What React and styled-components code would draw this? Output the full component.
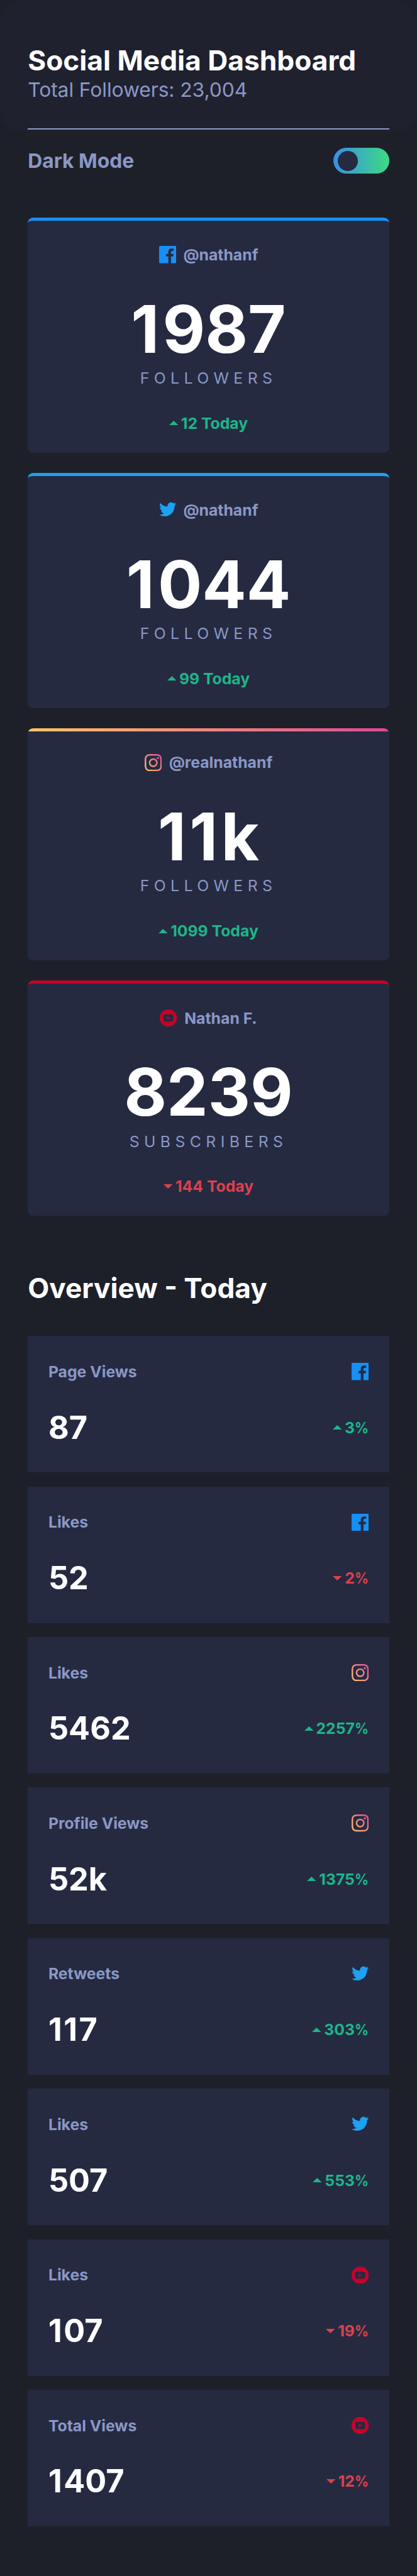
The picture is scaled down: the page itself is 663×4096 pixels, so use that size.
import React from "react";
import styled, { createGlobalStyle } from "styled-components";

/* Converts design units (750-wide artboard) to page pixels. */
const u = (n) => `${+(n * 0.884).toFixed(3)}px`;

const color = {
  page: "#1e2029",
  top: "#1f212e",
  card: "#252a41",
  text: "#8b97c6",
  white: "#ffffff",
  up: "#1eb589",
  down: "#dc414c",
  facebook: "#178ff5",
  twitter: "#1da1f2",
  youtube: "#c4032b",
};

const GlobalStyle = createGlobalStyle`
  *, *::before, *::after { box-sizing: border-box; }
  body {
    margin: 0;
    background: ${color.page};
    font-family: Inter, "Liberation Sans", sans-serif;
    color: ${color.text};
  }
  h1, h2, p { margin: 0; }
`;

const Page = styled.main`
  height: 4096px;
  overflow: hidden;
`;

const Top = styled.div`
  height: ${u(237)};
  border-radius: ${u(40)};
  background: ${color.top};
  padding: ${u(78)} ${u(50)} 0;
`;

const Title = styled.h1`
  font-size: ${u(50.1)};
  line-height: ${u(62)};
  font-weight: 700;
  color: ${color.white};
`;

const Total = styled.p`
  font-size: ${u(36)};
  line-height: ${u(42)};
  font-weight: 400;
  letter-spacing: ${u(-0.1)};
`;

const Rule = styled.div`
  margin-top: ${u(49)};
  height: ${u(2)};
  background: ${color.text};
`;

const ModeRow = styled.div`
  display: flex;
  justify-content: space-between;
  align-items: center;
  height: ${u(48)};
  margin: ${u(28)} ${u(50)} ${u(78)};
  font-size: ${u(36)};
  font-weight: 700;
`;

const Toggle = styled.div`
  width: ${u(100)};
  height: ${u(47)};
  padding: ${u(6)} ${u(8)};
  border-radius: ${u(24)};
  background: linear-gradient(90deg, #378fe6, #3eda82);
`;

const Knob = styled.div`
  width: ${u(36)};
  height: ${u(36)};
  border-radius: 50%;
  background: ${color.card};
`;

const Followers = styled.section`
  display: flex;
  flex-direction: column;
  gap: ${u(36.7)};
  padding: 0 ${u(50)};
`;

const FollowerCard = styled.article`
  display: flex;
  flex-direction: column;
  align-items: center;
  height: ${(p) => (p.$gradient ? u(417) : u(423))};
  border-radius: ${u(10)};
  background: ${(p) =>
    p.$gradient
      ? `linear-gradient(90deg, #fdc366, #df4896) top / 100% ${u(6)} no-repeat, ${color.card}`
      : color.card};
  border-top: ${(p) => (p.$gradient ? "0" : `${u(6)} solid ${p.$accent}`)};
  padding-top: ${(p) => (p.$gradient ? u(44) : u(44.34))};
`;

const Handle = styled.div`
  display: flex;
  align-items: center;
  gap: ${u(13)};
  height: ${u(34)};
  font-size: ${u(28)};
  font-weight: 700;
`;

const BigNumber = styled.div`
  margin-top: ${u(46)};
  height: ${u(142)};
  line-height: ${u(142)};
  font-size: ${u(118)};
  font-weight: 700;
  color: ${color.white};
`;

const One = styled.span`
  letter-spacing: 0.05em;
`;

const Caption = styled.div`
  height: ${u(34)};
  line-height: ${u(34)};
  font-size: ${u(28)};
  font-weight: 400;
  letter-spacing: ${u(8.4)};
  text-transform: uppercase;
`;

const Change = styled.div`
  display: flex;
  align-items: center;
  gap: ${u(5)};
  height: ${u(34)};
  font-size: ${u(28)};
  font-weight: 700;
  color: ${(p) => (p.$down ? color.down : color.up)};
`;

const TodayChange = styled(Change)`
  margin-top: ${u(47)};
`;

/* Slightly condensed percent sign. */
const Percent = styled.span`
  display: inline-block;
  margin-left: -0.12em;
  transform: scaleX(0.88);
  transform-origin: right;
`;

const Arrow = styled.svg`
  width: ${u(16.5)};
  height: ${u(8)};
  fill: currentColor;
`;

const Heading = styled.h2`
  margin: ${u(99)} ${u(50)} ${u(55)};
  font-size: ${u(50)};
  line-height: ${u(62)};
  font-weight: 700;
  color: ${color.white};
`;

const Overview = styled.section`
  display: flex;
  flex-direction: column;
  gap: ${u(25.5)};
  padding: 0 ${u(50)};
`;

const StatCard = styled.article`
  height: ${u(245.35)};
  padding: ${u(47)} ${u(37)} 0;
  background: ${color.card};
`;

const StatRow = styled.div`
  display: flex;
  justify-content: space-between;
  align-items: center;
`;

const StatLabel = styled.div`
  height: ${u(34)};
  line-height: ${u(34)};
  font-size: ${u(28)};
  font-weight: 700;
`;

const StatBottom = styled(StatRow)`
  margin-top: ${u(49.5)};
`;

const StatValue = styled.div`
  height: ${u(68)};
  line-height: ${u(68)};
  font-size: ${u(57)};
  font-weight: 700;
  color: ${color.white};
`;

const Icon = styled.svg`
  display: block;
  width: ${u(31)};
  height: ${u(31)};
`;

const icons = {
  facebook: (
    <Icon viewBox="0 0 20 20">
      <path
        fill={color.facebook}
        d="M18.896 0H1.104C.494 0 0 .494 0 1.104v17.793C0 19.506.494 20 1.104 20h9.58v-7.745H8.076V9.237h2.606V7.01c0-2.583 1.578-3.99 3.883-3.99 1.104 0 2.052.082 2.329.119v2.7h-1.598c-1.254 0-1.496.597-1.496 1.47v1.928h2.989l-.39 3.018h-2.6V20h5.098c.608 0 1.102-.494 1.102-1.104V1.104C20 .494 19.506 0 18.896 0z"
      />
    </Icon>
  ),
  twitter: (
    <Icon viewBox="0 -1 20 20">
      <path
        fill={color.twitter}
        d="M20 2.172a8.192 8.192 0 01-2.357.646 4.11 4.11 0 001.805-2.27 8.22 8.22 0 01-2.606.996A4.096 4.096 0 0013.847.248c-2.65 0-4.596 2.472-3.998 5.037A11.648 11.648 0 011.392.998a4.109 4.109 0 001.27 5.478 4.086 4.086 0 01-1.858-.513c-.045 1.9 1.318 3.679 3.291 4.075a4.113 4.113 0 01-1.853.07 4.106 4.106 0 003.833 2.849A8.25 8.25 0 010 14.658a11.616 11.616 0 006.29 1.843c7.618 0 11.922-6.434 11.662-12.205A8.354 8.354 0 0020 2.172z"
      />
    </Icon>
  ),
  instagram: (
    <Icon viewBox="0 0 20 20">
      <defs>
        <linearGradient id="ig" x1="0%" x2="100%" y1="100%" y2="0%">
          <stop offset="0%" stopColor="#fdc468" />
          <stop offset="100%" stopColor="#df4996" />
        </linearGradient>
      </defs>
      <path
        fill="url(#ig)"
        d="M10 1.802c2.67 0 2.987.01 4.042.059 2.71.123 3.975 1.409 4.099 4.099.048 1.054.057 1.37.057 4.04 0 2.672-.01 2.988-.057 4.042-.124 2.687-1.387 3.975-4.1 4.099-1.054.048-1.37.058-4.041.058-2.67 0-2.987-.01-4.04-.058-2.717-.124-3.977-1.416-4.1-4.1-.048-1.054-.058-1.37-.058-4.041 0-2.67.01-2.986.058-4.04.124-2.69 1.387-3.977 4.1-4.1 1.054-.048 1.37-.058 4.04-.058zM10 0C7.284 0 6.944.012 5.877.06 2.246.227.227 2.242.061 5.877.01 6.944 0 7.284 0 10s.012 3.057.06 4.123c.167 3.632 2.182 5.65 5.817 5.817 1.067.048 1.407.06 4.123.06s3.057-.012 4.123-.06c3.629-.167 5.652-2.182 5.816-5.817.05-1.066.061-1.407.061-4.123s-.012-3.056-.06-4.122C19.777 2.249 17.76.228 14.124.06 13.057.01 12.716 0 10 0zm0 4.865a5.135 5.135 0 100 10.27 5.135 5.135 0 000-10.27zm0 8.468a3.333 3.333 0 110-6.666 3.333 3.333 0 010 6.666zm5.338-9.87a1.2 1.2 0 100 2.4 1.2 1.2 0 000-2.4z"
      />
    </Icon>
  ),
  youtube: (
    <Icon viewBox="0 0 24 24">
      <path
        fill={color.youtube}
        fillRule="evenodd"
        d="M12 0C5.373 0 0 5.373 0 12s5.373 12 12 12 12-5.373 12-12S18.627 0 12 0zm4.441 16.892c-2.102.144-6.784.144-8.883 0C5.282 16.736 5.017 15.622 5 12c.017-3.629.285-4.736 2.558-4.892 2.099-.144 6.782-.144 8.883 0C18.718 7.264 18.982 8.378 19 12c-.018 3.629-.285 4.736-2.559 4.892zM10 9.658l4.917 2.338L10 14.342V9.658z"
      />
    </Icon>
  ),
};

/* Large figures, with a little more room after each 1. */
const Figures = ({ children }) =>
  children.split("").map((ch, i) => (ch === "1" ? <One key={i}>1</One> : ch));

const ChangeArrow = ({ down }) => (
  <Arrow viewBox="0 0 8 4" preserveAspectRatio="none">
    <path d={down ? "M0 0h8L4 4z" : "M0 4h8L4 0z"} />
  </Arrow>
);

const accounts = [
  { net: "facebook", handle: "@nathanf", count: "1987", unit: "Followers", change: "12" },
  { net: "twitter", handle: "@nathanf", count: "1044", unit: "Followers", change: "99" },
  { net: "instagram", handle: "@realnathanf", count: "11k", unit: "Followers", change: "1099" },
  { net: "youtube", handle: "Nathan F.", count: "8239", unit: "Subscribers", change: "144", down: true },
];

const stats = [
  { label: "Page Views", net: "facebook", value: "87", change: "3" },
  { label: "Likes", net: "facebook", value: "52", change: "2", down: true },
  { label: "Likes", net: "instagram", value: "5462", change: "2257" },
  { label: "Profile Views", net: "instagram", value: "52k", change: "1375" },
  { label: "Retweets", net: "twitter", value: "117", change: "303" },
  { label: "Likes", net: "twitter", value: "507", change: "553" },
  { label: "Likes", net: "youtube", value: "107", change: "19", down: true },
  { label: "Total Views", net: "youtube", value: "1407", change: "12", down: true },
];

export default function App() {
  return (
    <Page>
      <GlobalStyle />
      <Top>
        <Title>Social Media Dashboard</Title>
        <Total>Total Followers: 23,004</Total>
        <Rule />
      </Top>
      <ModeRow>
        <span>Dark Mode</span>
        <Toggle>
          <Knob />
        </Toggle>
      </ModeRow>
      <Followers>
        {accounts.map((a) => (
          <FollowerCard key={a.net} $accent={color[a.net]} $gradient={a.net === "instagram"}>
            <Handle>
              {icons[a.net]}
              <span>{a.handle}</span>
            </Handle>
            <BigNumber>
              <Figures>{a.count}</Figures>
            </BigNumber>
            <Caption>{a.unit}</Caption>
            <TodayChange $down={a.down}>
              <ChangeArrow down={a.down} />
              <span>{a.change} Today</span>
            </TodayChange>
          </FollowerCard>
        ))}
      </Followers>
      <Heading>Overview - Today</Heading>
      <Overview>
        {stats.map((s) => (
          <StatCard key={s.label + s.net}>
            <StatRow>
              <StatLabel>{s.label}</StatLabel>
              {icons[s.net]}
            </StatRow>
            <StatBottom>
              <StatValue>
                <Figures>{s.value}</Figures>
              </StatValue>
              <Change $down={s.down}>
                <ChangeArrow down={s.down} />
                <span>
                  {s.change}
                  <Percent>%</Percent>
                </span>
              </Change>
            </StatBottom>
          </StatCard>
        ))}
      </Overview>
    </Page>
  );
}
